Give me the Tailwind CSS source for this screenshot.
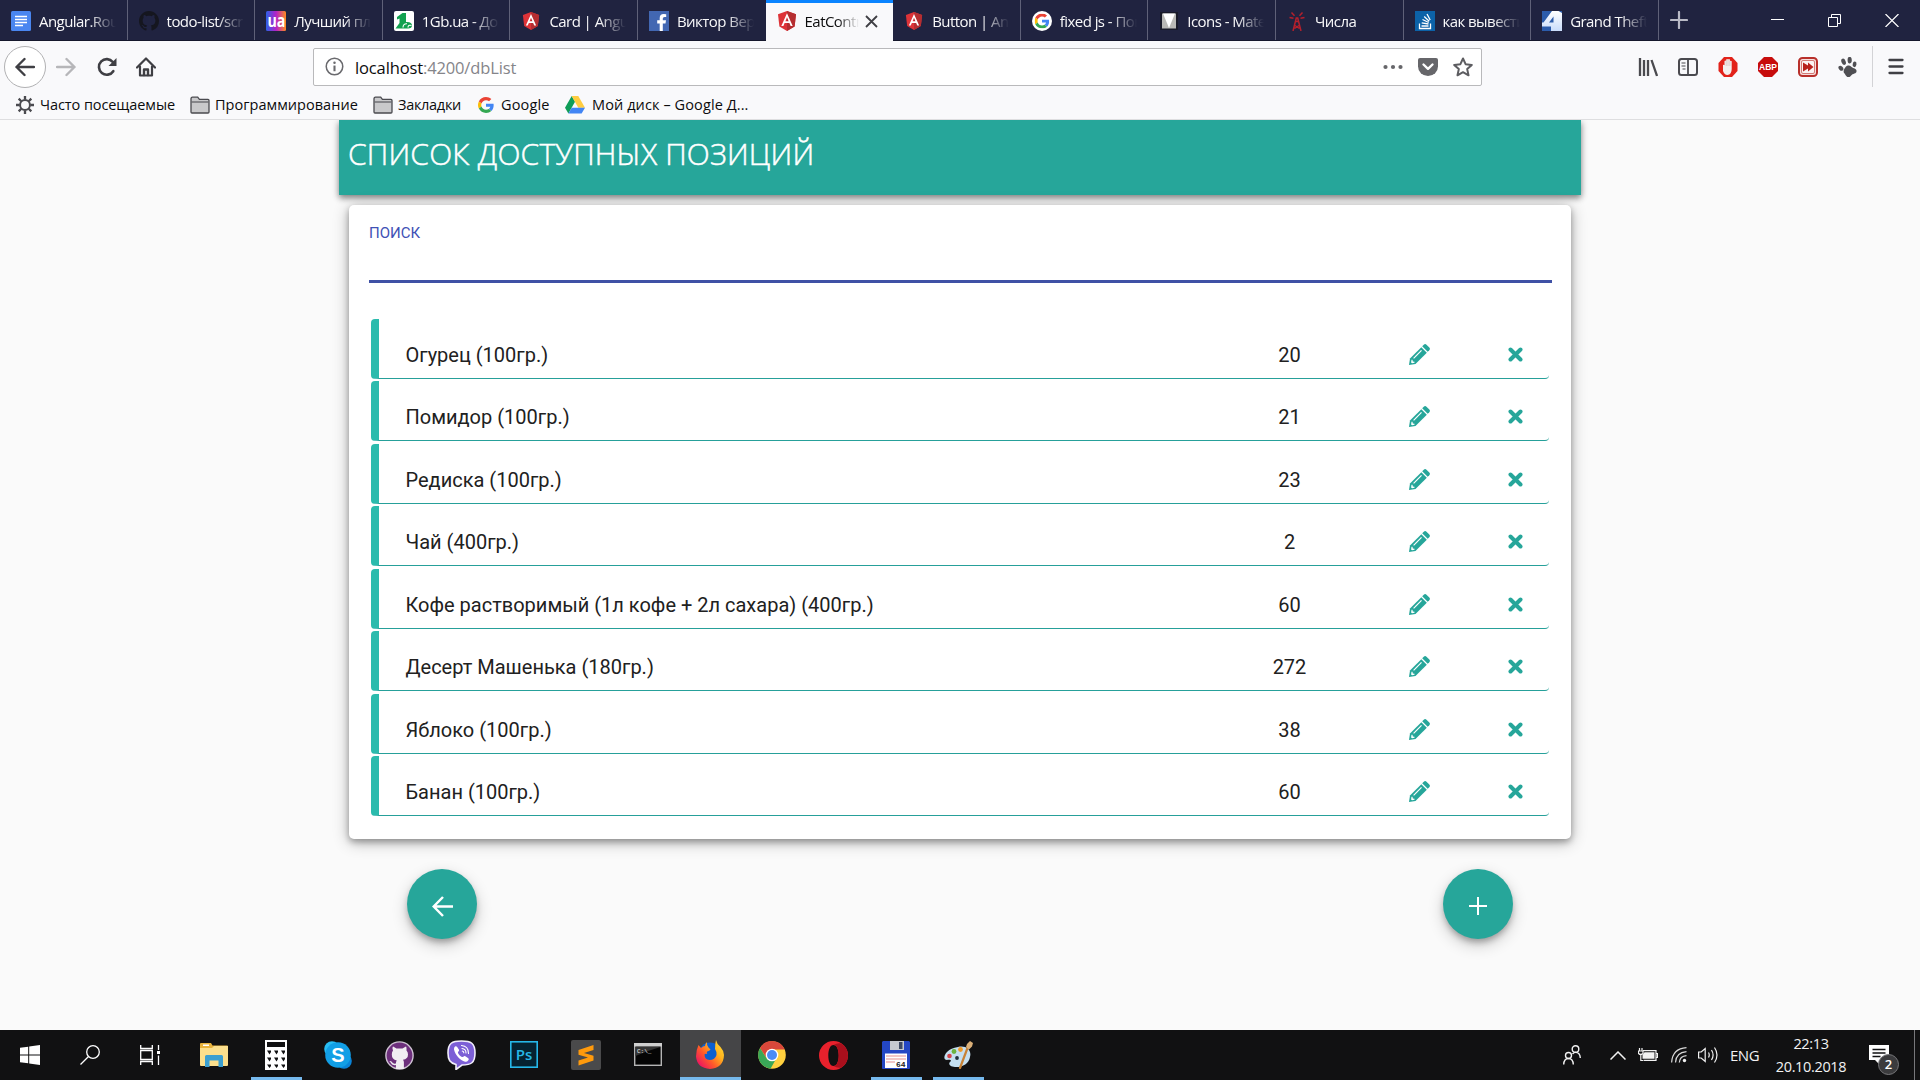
<!DOCTYPE html>
<html lang="ru">
<head>
<meta charset="utf-8">
<title>EatControl</title>
<script src="https://cdn.jsdelivr.net/npm/@tailwindcss/browser@4"></script>
</head>
<body class="w-[1920px] h-[1080px] overflow-hidden flex flex-col bg-[#fafafa] font-['Open_Sans','Noto_Sans',sans-serif]">

<svg class="hidden">
  <symbol id="angular" viewBox="0 0 20 20"><path fill="#dd3338" d="M10 0 19 3.2 17.6 15.500 10 20 2.400 15.500 1 3.200z"/><path fill="#b52e31" d="M10 0 19 3.200 17.600 15.500 10 20z"/><path fill="#fff" fill-rule="evenodd" d="M10 2.300 15.700 15H13.600L12.400 12.100H7.600L6.400 15H4.300zM10 6.300 8.400 10.300H11.600z"/></symbol>
  <symbol id="google" viewBox="0 0 48 48"><path fill="#ea4335" d="M24 9.500c3.540 0 6.710 1.220 9.210 3.600l6.850-6.850C35.900 2.380 30.470 0 24 0 14.620 0 6.510 5.380 2.560 13.220l7.980 6.190C12.430 13.720 17.740 9.500 24 9.500z"/><path fill="#4285f4" d="M46.980 24.550c0-1.570-.15-3.090-.38-4.550H24v9.020h12.940c-.58 2.960-2.260 5.480-4.780 7.180l7.730 6c4.510-4.180 7.090-10.360 7.090-17.650z"/><path fill="#fbbc05" d="M10.530 28.590c-.48-1.450-.76-2.990-.76-4.590s.27-3.140.76-4.590l-7.980-6.190C.92 16.460 0 20.120 0 24c0 3.880.92 7.540 2.560 10.780l7.970-6.190z"/><path fill="#34a853" d="M24 48c6.480 0 11.930-2.130 15.890-5.810l-7.730-6c-2.150 1.450-4.920 2.300-8.160 2.300-6.260 0-11.570-4.220-13.470-9.910l-7.980 6.190C6.510 42.620 14.620 48 24 48z"/></symbol>
  <symbol id="octocat" viewBox="0 0 16 16"><path d="M8 0C3.580 0 0 3.580 0 8c0 3.540 2.290 6.530 5.470 7.590.4.070.55-.17.55-.38 0-.19-.01-.82-.01-1.490-2.010.37-2.530-.49-2.690-.94-.09-.23-.48-.94-.82-1.130-.28-.15-.68-.52-.01-.53.63-.01 1.080.58 1.230.82.72 1.210 1.870.87 2.330.66.070-.52.28-.87.51-1.070-1.780-.2-3.640-.89-3.640-3.950 0-.87.31-1.590.82-2.150-.08-.2-.36-1.020.080-2.120 0 0 .67-.21 2.200.82.64-.18 1.320-.27 2-.27s1.360.09 2 .27c1.530-1.040 2.200-.82 2.200-.82.44 1.100.16 1.920.08 2.120.51.56.82 1.270.82 2.150 0 3.070-1.870 3.750-3.650 3.950.29.25.54.73.54 1.480 0 1.070-.01 1.930-.01 2.200 0 .21.15.46.55.38A8.010 8.010 0 0 0 16 8c0-4.420-3.580-8-8-8z"/></symbol>
  <symbol id="folder" viewBox="0 0 20 18"><path d="M1 16V3q0-1.800 1.500-1.800h5.200L9.400 3.400H18q1 0 1 1V16q0 1-1 1H2q-1 0-1-1z" fill="#c9c9cb" stroke="#4a4a4f" stroke-width="1.300"/><path d="M1.500 6h17" stroke="#5a5a5f" stroke-width="1.200"/></symbol>
  <symbol id="pencil" viewBox="0 0 21 21"><path fill="#26a69a" d="M1 14.500 12.300 3.200 17.800 8.700 6.500 20 0 21z"/><path fill="#26a69a" d="m13.200 2.300 1.600-1.600q1.300-1.200 2.700 0l2.800 2.800q1.300 1.300 0 2.700l-1.600 1.600z"/><path d="M4.600 14.300 12.500 6.400" stroke="#fff" stroke-width="1.200"/><path fill="#fff" d="m2.500 15.800 1 0 .3 1.700 1.700.3v1l-2.500.5-.9-.9z"/></symbol>
  <symbol id="cross" viewBox="0 0 15 15"><path d="m2.500 2.500 10 10M12.500 2.500l-10 10" stroke="#26a69a" stroke-width="4" stroke-linecap="round"/></symbol>
</svg>

<header class="shrink-0">
  <div id="tabs" class="h-[41px] flex bg-[#202340] border-b border-[#15172c] text-[15px] text-[#f9f9fa]"></div>

  <div class="h-[51px] flex items-center bg-[#f9f9fb] pl-[4px]">
    <div class="w-[42px] h-[42px] rounded-full border border-[#b1b1b3] bg-white flex items-center justify-center">
      <svg class="w-5 h-5" viewBox="0 0 20 20" fill="none" stroke="#3f3f44" stroke-width="2.400" stroke-linecap="round" stroke-linejoin="round"><path d="M19 10H1.500M9.500 2 1.500 10l8 8"/></svg>
    </div>
    <svg class="w-5 h-5 ml-[10px]" viewBox="0 0 20 20" fill="none" stroke="#b6b6b9" stroke-width="2.400" stroke-linecap="round" stroke-linejoin="round"><path d="M1 10h17.500M10.500 2l8 8-8 8"/></svg>
    <svg class="w-5 h-5 ml-[21px]" viewBox="0 0 20 20" fill="none" stroke="#3f3f44" stroke-width="2.600" stroke-linecap="round"><path d="M16.300 14.200A7.800 7.800 0 1 1 15.800 5"/><path d="M19.500 1v8h-8z" fill="#3f3f44" stroke="none"/></svg>
    <svg class="w-5 h-5 ml-[19px]" viewBox="0 0 20 20" fill="none" stroke="#3f3f44" stroke-width="2.200" stroke-linecap="round" stroke-linejoin="round"><path d="M1 10.500 10 1.500l9 9M4 9.500V18.500h12V9.500"/><path d="M8 18v-5.500h4V18" stroke-width="2.400"/></svg>
    <div class="ml-[157px] w-[1169px] h-[38px] bg-white border border-[#b9b9bb] rounded-[2px] flex items-center pl-[11px] pr-[8px]">
      <svg class="w-[19px] h-[19px]" viewBox="0 0 20 20" fill="none" stroke="#6a6a6e"><circle cx="10" cy="10" r="8.700" stroke-width="1.600"/><path d="M10 9v6" stroke-width="2.200"/><circle cx="10" cy="6" r="1.300" fill="#6a6a6e" stroke="none"/></svg>
      <span class="ml-[11px] pt-[2px] text-[16.500px] leading-5 tracking-[-0.130px] text-[#85858a]"><span class="text-[#0c0c0d]">localhost</span>:4200/dbList</span>
      <svg class="w-5 h-5 ml-auto" viewBox="0 0 20 20" fill="#66666a"><circle cx="2.500" cy="10" r="2.100"/><circle cx="10" cy="10" r="2.100"/><circle cx="17.500" cy="10" r="2.100"/></svg>
      <svg class="w-5 h-5 ml-[15px]" viewBox="0 0 20 20"><path fill="#66666a" d="M2 1h16q2 0 2 2v6.500a10 9.500 0 0 1-20 0V3Q0 1 2 1z"/><path d="m5.500 7.500 4.500 4.300 4.500-4.300" fill="none" stroke="#fff" stroke-width="2.400" stroke-linecap="round" stroke-linejoin="round"/></svg>
      <svg class="w-5 h-5 ml-[15px]" viewBox="0 0 20 20"><path fill="none" stroke="#5d5d61" stroke-width="2" stroke-linejoin="round" d="m10 1.500 2.600 5.700 6.200.7-4.600 4.200 1.300 6.200L10 15.200l-5.500 3.100 1.300-6.200L1.200 7.900l6.200-.7z"/></svg>
    </div>
    <div class="ml-[156px] flex items-center gap-5">
      <svg class="w-5 h-5" viewBox="0 0 20 20" stroke="#4a4a4f" stroke-width="2.300"><path d="M2 1v18M6 3v16M10 3v16M13.500 3l5.500 16"/></svg>
      <svg class="w-5 h-5" viewBox="0 0 20 20" fill="none" stroke="#4a4a4f"><rect x="1" y="2" width="18" height="16" rx="2.500" stroke-width="2"/><path d="M10 2v16" stroke-width="1.800"/><path d="M3.500 6h4M3.500 9h4M4.500 12h3" stroke-width="1.200"/></svg>
      <svg class="w-5 h-5" viewBox="0 0 20 20"><path fill="#e2231a" d="M6 0h8l5.500 6v8L14 20H6L.5 14V6z"/><path fill="#f4f0ee" d="M5 8q.9-.8 1.500.2V4q1-1 1.700 0V2.500q1-1 1.800 0 1-1 1.900 0V4q1.200-.8 1.800.2V12q0 5.500-4.300 6-3 0-4.400-4z"/><path d="M8.200 4v5M10 2.500V9M11.900 4v5" stroke="#c9a9a5" stroke-width=".5"/></svg>
      <svg class="w-5 h-5" viewBox="0 0 20 20"><path fill="#c70d0c" d="M6 0h8l6 6v8l-6 6H6l-6-6V6z"/><text x="10" y="13.300" text-anchor="middle" textLength="18" lengthAdjust="spacingAndGlyphs" fill="#fff" class="text-[9.500px] font-bold font-['Liberation_Sans',sans-serif]">ABP</text></svg>
      <svg class="w-5 h-5" viewBox="0 0 20 20"><rect x="1" y="1" width="18" height="18" rx="3.500" fill="#f6dedd" stroke="#b8302b" stroke-width="2"/><rect x="3.500" y="3.500" width="13" height="13" rx="1.500" fill="#fbf3f2" stroke="#c9605b" stroke-width=".8"/><path fill="#b8211c" d="m5 5.500 5 3V5.500l5.500 4.500-5.500 4.500v-3l-5 3z"/></svg>
      <svg class="w-5 h-5" viewBox="0 0 20 20" fill="#4f4f53"><g transform="rotate(-14 10 10)"><ellipse cx="7" cy="3.800" rx="2.100" ry="3.300" transform="rotate(-8 7 3.800)"/><ellipse cx="13.300" cy="3.700" rx="2.100" ry="3.300" transform="rotate(12 13.300 3.700)"/><ellipse cx="2.800" cy="9.500" rx="2" ry="2.800" transform="rotate(-30 2.800 9.500)"/><ellipse cx="17" cy="9" rx="1.900" ry="2.800" transform="rotate(25 17 9)"/><path d="M10.300 8.600c2.600 0 2.700 2.400 4.500 3.600 2.600 1.500 3.200 3.300 2 4.800-1.700 1.300-2.700.5-4.200 1.200-2 1-3 2.300-4.800 1.800-2.600-1-2-3.500-3-5C3.500 13 7.500 8.600 10.300 8.600z"/></g></svg>
    </div>
    <div class="ml-[14px] w-px h-[41px] bg-[#d3d3d6]"></div>
    <svg class="w-4 h-5 ml-[15px]" viewBox="0 0 16 20" stroke="#3f3f44" stroke-width="2.300" stroke-linecap="round"><path d="M1.500 3h13M1.500 9.500h13M1.500 16h13"/></svg>
  </div>

  <nav class="h-[28px] flex items-center bg-[#f9f9fb] border-b border-[#dedee0] pl-4 text-[14.500px] leading-5 text-[#0c0c0d] whitespace-nowrap">
    <a class="w-[174px] flex items-center gap-[6px] pb-[2px]"><svg class="w-[18px] h-[18px]" viewBox="0 0 20 20" fill="none" stroke="#4a4a4f"><circle cx="10" cy="10" r="5.500" stroke-width="2.200"/><path stroke-width="2.600" d="M10 0v4M10 16v4M0 10h4M16 10h4M3 3l2.800 2.800M14.200 14.200 17 17M17 3l-2.800 2.800M5.800 14.200 3 17"/></svg><span class="tracking-[-0.080px]">Часто посещаемые</span></a>
    <a class="w-[183px] flex items-center gap-[5px] pb-[2px]"><svg class="w-5 h-[18px]"><use href="#folder"/></svg><span class="tracking-[0.030px]">Программирование</span></a>
    <a class="w-[105px] flex items-center gap-[5px] pb-[2px]"><svg class="w-5 h-[18px]"><use href="#folder"/></svg><span class="tracking-[-0.300px]">Закладки</span></a>
    <a class="w-[87px] flex items-center gap-[7px] pb-[2px]"><svg class="w-4 h-4"><use href="#google"/></svg><span class="tracking-[0.150px]">Google</span></a>
    <a class="flex items-center gap-[7px] pb-[2px]"><svg class="w-5 h-[18px]" viewBox="0 0 20 18"><path fill="#0f9d58" d="M6.700 0 0 11.700 3.400 17.500 10 5.800z"/><path fill="#ffcd40" d="M6.700 0h6.600L20 11.700h-6.700z"/><path fill="#4285f4" d="M6.700 11.700H20l-3.400 5.800H3.400z"/></svg><span class="tracking-[0.100px]">Мой диск – Google Д...</span></a>
  </nav>
</header>

<main class="h-[910px] shrink-0 overflow-hidden flex flex-col items-center font-[Roboto,sans-serif]">
  <h1 class="w-[1242px] h-[75px] shrink-0 pl-[9px] pt-[11px] bg-[#26a69a] text-white text-[30px] leading-[46px] font-light tracking-[0.210px] [-webkit-text-stroke:0.5px_white] font-['Open_Sans','Noto_Sans',sans-serif] whitespace-nowrap shadow-[0_3px_6px_rgba(0,0,0,0.4),0_2px_8px_rgba(0,0,0,0.15)]">СПИСОК ДОСТУПНЫХ ПОЗИЦИЙ</h1>
  <section class="mt-[10px] w-[1222px] h-[634px] shrink-0 rounded-[5px] bg-white pl-5 pr-[19px] shadow-[0_3px_6px_rgba(0,0,0,0.28),0_3px_16px_rgba(0,0,0,0.3)]">
    <div class="h-[78px] pt-[18px] border-b-[3px] border-[#3f51a5] text-[#3f51b5] text-[15px] leading-5">ПОИСК</div>
    <div id="rows" class="mt-[36px] ml-[2px] mr-[3px] flex flex-col gap-[2.430px]"></div>
  </section>
  <div class="mt-[30px] w-[1106px] flex justify-between">
    <button class="w-[70px] h-[70px] rounded-full bg-[#26a69a] shadow-[0_4px_6px_-1px_rgba(0,0,0,0.28),0_6px_16px_rgba(0,0,0,0.2)] flex items-center justify-center pt-[4px]"><svg class="w-[21px] h-[21px]" viewBox="0 0 21 21" fill="none" stroke="#fff" stroke-width="2.500"><path d="M21 10.500H2M11 1 1.700 10.500 11 20"/></svg></button>
    <button class="w-[70px] h-[70px] rounded-full bg-[#26a69a] shadow-[0_4px_6px_-1px_rgba(0,0,0,0.28),0_6px_16px_rgba(0,0,0,0.2)] flex items-center justify-center pt-[4px]"><svg class="w-[18px] h-[18px]" viewBox="0 0 18 18" stroke="#fff" stroke-width="2"><path d="M0 9h18M9 0v18"/></svg></button>
  </div>
</main>

<footer class="h-[50px] shrink-0 flex bg-[#111112] text-[#f2f2f2]">
  <div class="w-[60px] flex items-center justify-center"><svg class="w-5 h-5" viewBox="0 0 20 20" fill="#fff"><path d="M0 2.800 8.200 1.700v7.800H0zM9.200 1.500 20 0v9.500H9.200zM0 10.500h8.200v7.800L0 17.200zM9.200 10.500H20V20L9.200 18.500z"/></svg></div>
  <div class="w-[60px] flex items-center justify-center"><svg class="w-5 h-5" viewBox="0 0 20 20" fill="none" stroke="#fff" stroke-width="1.300"><circle cx="13" cy="7" r="6.300"/><path d="M8.500 11.500.5 19.500"/></svg></div>
  <div class="w-[60px] flex items-center justify-center"><svg class="w-5 h-5" viewBox="0 0 20 20" fill="none" stroke="#fff" stroke-width="1.300"><path d="M.7 0v3.500h11.600V0M.7 20v-3.500h11.600V20M.7 5.500h11.600v9H.7zM18.500 0v5M18.500 10.500V20"/><path d="M18.500 6v3" stroke-width="3"/></svg></div>
  <div class="w-[66px] flex items-center justify-center pl-[2px] pb-px"><svg class="w-7 h-6" viewBox="0 0 28 24"><path fill="#e8b33c" d="M0 1q0-1 1-1h10l1.500 2.500H27q1 0 1 1V22H0z"/><path fill="#fbdf8c" d="M0 5h12l2-2h14v19q0 1-1 1H1q-1 0-1-1z"/><path fill="#fff" d="M3 1.500h6v1.500H3z"/><path fill="#3b9fd0" d="M5 13.500q0-1.500 1.500-1.500h15q1.500 0 1.500 1.500V24h-4.500v-6.500h-9V24H5z"/></svg></div>
  <div class="w-[60px] flex flex-col items-center justify-between pt-[10px]"><svg class="w-[22px] h-[30px]" viewBox="0 0 22 30"><path fill="#fff" d="M0 0h22v30H0z"/><path fill="#111112" d="M2 2h18v5H2zM2 10.500h4v1.500L4.500 14.500zM9 10.500h4v1.500L11.500 14.500zM16 10.500h4v1.500L18.500 14.500zM2 17.500h4v1.500L4.500 21.500zM9 17.500h4v1.500L11.500 21.500zM16 17.500h4v1.500L18.500 21.500zM2 24.500h4V26L4.500 28zM9 24.500h4V26L11.500 28zM16 24.500h4V26L18.500 28z"/></svg><div class="w-[51px] h-[3px] bg-[#76b9ed]"></div></div>
  <div class="w-[63px] flex items-center justify-center"><svg class="w-7 h-7" viewBox="0 0 28 28"><circle cx="8" cy="8" r="7.800" fill="#28bdf3"/><circle cx="20" cy="20" r="7.800" fill="#0a84d8"/><circle cx="14" cy="14" r="12.800" fill="#129fe6"/><text x="14" y="21" text-anchor="middle" fill="#fff" class="text-[20px] font-bold font-['Liberation_Sans',sans-serif]">S</text></svg></div>
  <div class="w-[61px] flex items-center justify-center"><svg class="w-[29px] h-[29px]" viewBox="0 0 29 29"><circle cx="14.500" cy="14.500" r="13.600" fill="#6d2f7c" stroke="#cfc3d3" stroke-width="1.400"/><path fill="#f1edf2" d="M7.500 7.500q0-2 .6-2l3.400 2h6l3.400-2q.6 0 .6 2v2q1.500 1.500 1.500 4 0 4.500-5 5.300.9 1 .9 2.500V28h-8v-4q-4 .8-5.300-2.500-.5-1-1.300-1.500 2.300-.5 3 1.500 1 1.600 3.600 1 0-2 .9-3-5-.8-5-6 0-2.500 1.200-4z"/></svg></div>
  <div class="w-[62px] flex items-center justify-center"><svg class="w-[29px] h-[30px]" viewBox="0 0 29 30"><path fill="#7c5fd6" stroke="#f2effb" stroke-width="1.600" d="M14.500 1C24 1 28 3 28 13s-4 12-13 12l-6 4.500v-5C3 23 1 20 1 13 1 3 5 1 14.500 1z"/><path fill="#fff" d="M8 6.500q1-.8 2 .2l2 3q.5 1-.8 2-1 .8 1.300 3.500 2.800 2.500 3.800 1.600 1-1.200 2-.6l3 2q1 .8 0 2-1.400 2-3.200 1.500C13 20 8.500 15.500 7 9.500q-.2-1.800 1-3z"/><path d="M14.500 5.500q7 .5 7 8M15 8.500q4 .4 4 4.500M15.300 11q1.500.2 1.500 1.800" fill="none" stroke="#fff" stroke-width="1.100" stroke-linecap="round"/></svg></div>
  <div class="w-[64px] flex items-center justify-center pb-[2px]"><svg class="w-7 h-[27px]" viewBox="0 0 28 27"><rect x=".8" y=".8" width="26.400" height="25.400" fill="#062230" stroke="#26b7e8" stroke-width="1.600"/><text x="14" y="18.500" text-anchor="middle" fill="#26b7e8" class="text-[15px] font-semibold font-['Open_Sans',sans-serif]">Ps</text></svg></div>
  <div class="w-[60px] flex items-center justify-center"><svg class="w-[30px] h-[30px]" viewBox="0 0 30 30"><rect width="30" height="30" rx="2" fill="#4a4a4b"/><path fill="#ff9a0c" d="M7.500 10 22.500 5v5L13 13l9.500 2.700v4.800L7.500 25.500v-5l9.500-3-9.500-2.700z"/></svg></div>
  <div class="w-[64px] flex items-center justify-center pr-px pb-[2px]"><svg class="w-7 h-[23px]" viewBox="0 0 28 23"><rect x=".7" y=".7" width="26.600" height="21.600" fill="#050505" stroke="#b5b5b5" stroke-width="1.400"/><path fill="#cfcfcf" d="M0 0h28v3.500H0z"/><path fill="#333" d="M1.500 4h25L14 8 1.500 13z"/><text x="3" y="9.500" fill="#eee" class="text-[6px] font-['Liberation_Mono',monospace]">C:\_</text></svg></div>
  <div class="w-[61px] bg-[#454547] flex flex-col items-center justify-between pt-[10px]"><svg class="w-7 h-[29px] mr-[2px]" viewBox="0 0 28 29"><defs><linearGradient id="fx" x1="1" y1="0" x2=".1" y2=".8"><stop offset="0" stop-color="#ffe43a"/><stop offset=".4" stop-color="#ffb21d"/><stop offset=".7" stop-color="#ff5a2a"/><stop offset="1" stop-color="#ee1b5c"/></linearGradient></defs><circle cx="14" cy="13.500" r="11" fill="#0a5fd0"/><path fill="url(#fx)" d="M2.500 5 5 8q2-2 4-2 0-2 2-4-.5 3.500 1.500 5.500l2 2q-1 1.500-3.300 2-.8.700 0 2.500-1.500-.8-2.700.2 0 5.500 5 5.800Q19 20 20.500 15q.6-3-1.500-6 0-5 1-9 .8 4 4.500 7Q28 11 28 15 27.500 28 14 29 1 28 0 16.500 0 10 2.500 5z"/></svg><div class="w-full h-[3px] bg-[#76b9ed]"></div></div>
  <div class="w-[62px] flex items-center justify-center"><svg class="w-7 h-7" viewBox="0 0 28 28"><circle cx="14" cy="14" r="13.800" fill="#ffd03e"/><path fill="#d9473a" d="M2 7A13.800 13.800 0 0 1 26 7l.6 1.500H14L8.500 17z"/><path fill="#3aa757" d="M2 7A13.800 13.800 0 0 0 12.500 27.700L18 18H9z"/><circle cx="14" cy="14" r="6.300" fill="#fff"/><circle cx="14" cy="14" r="5" fill="#4a8cf5"/></svg></div>
  <div class="w-[61px] flex items-center justify-center"><svg class="w-[29px] h-[29px]" viewBox="0 0 29 29"><path fill="#e8212c" fill-rule="evenodd" d="M14.500 0a14.500 14.500 0 1 1 0 29 14.500 14.500 0 0 1 0-29zm0 4C11 4 9.300 9 9.300 14.500S11 25 14.500 25s5.200-5 5.200-10.500S18 4 14.500 4z"/><path fill="#a90f1c" d="M14.500 4q4-2.500 8-1.500Q29 7 29 14.500T22.500 26.500q-4 1-8-1.500c3.500 0 5.200-5 5.200-10.500S18 4 14.500 4z"/></svg></div>
  <div class="w-[64px] flex flex-col items-center justify-between pt-[11px]"><svg class="w-7 h-7" viewBox="0 0 28 28"><path fill="#2447c4" d="M1 0h26l1 1v26q0 1-1 1H1q-1 0-1-1V1z"/><path fill="#c6c9cf" d="M8 0h14v9H8z"/><path fill="#3f4a63" d="M17 1h3.500v7H17z"/><path fill="#fff" d="M3 12.500h22V27H3z"/><path d="M4 15h20M4 18h20M4 21h9" stroke="#e58f8f"/><text x="14" y="26" fill="#222" class="text-[8px] font-bold font-['Liberation_Mono',monospace]">64</text></svg><div class="w-[51px] h-[3px] bg-[#76b9ed]"></div></div>
  <div class="w-[60px] flex flex-col items-center justify-between pt-[11px]"><svg class="w-[29px] h-7" viewBox="0 0 29 28"><path fill="#c5dff0" d="M14 6C22 4 28 9 26 16c-1 7-8 10.500-15 10C5 26 4 22 6.500 20.500 8 19 5.500 18.500 3 19-1 19 0 14 3 11c3-3 6-4 11-5z"/><circle cx="10" cy="10.500" r="2.400" fill="#6cb33f"/><circle cx="16.500" cy="8.500" r="2.400" fill="#f09a28"/><circle cx="5.500" cy="15" r="2.300" fill="#d5454b"/><circle cx="13" cy="17" r="1.900" fill="#22313d"/><path d="M23.500 7 16 27" stroke="#c98234" stroke-width="2.200" stroke-linecap="round"/><path fill="#dbb078" d="m22 6 1-3 3-3 3 2-1 3.500-3 3z"/></svg><div class="w-[51px] h-[3px] bg-[#76b9ed]"></div></div>

  <div class="ml-auto flex items-center">
    <svg class="w-[18px] h-5" viewBox="0 0 18 20" fill="none" stroke="#f2f2f2" stroke-width="1.400"><circle cx="12.500" cy="4" r="3.300"/><circle cx="5.500" cy="10.500" r="3"/><path d="M.7 19.500q.3-6 4.800-6t4.800 6M9.500 9q1.500-1.600 3-1.600 4.500 0 4.800 5.600"/></svg>
    <svg class="w-4 h-[9px] ml-[29px]" viewBox="0 0 16 9" fill="none" stroke="#f2f2f2" stroke-width="1.500"><path d="m.5 8.500 7.500-7.500 7.500 7.500"/></svg>
    <svg class="w-5 h-[14px] ml-[12px]" viewBox="0 0 20 14" fill="none" stroke="#f2f2f2" stroke-width="1.200"><path d="M5 2.600h13v9.800H5.500M18.500 5.500h1v4h-1M1.500 0v3M4 0v3M.5 3h4.500v2.500q-2.200 2-4.500 0zM2.800 6v6.500H5"/><path fill="#f2f2f2" stroke="none" d="M6.500 4.200h10v6.600H4.500V7z"/></svg>
    <svg class="w-4 h-4 ml-[13px]" viewBox="0 0 16 16" fill="none" stroke="#d8d8d8" stroke-width="1.200"><path d="M.6 15.500Q1.500 1.500 15.500.6M4.500 15.500Q5 5.500 15.500 4.700M8.300 15.500Q8.800 9.200 15.500 8.700"/><circle cx="13.500" cy="13.500" r="1.700" fill="#f2f2f2" stroke="none"/></svg>
    <svg class="w-5 h-[18px] ml-[11px]" viewBox="0 0 20 18" fill="none" stroke="#f2f2f2" stroke-width="1.200"><path d="M.6 6v6h2.600l4 3.500v-13L3.200 6zM10.500 6.500q1.500 2.500 0 5M13.500 4q3.200 5 0 10M16.500 1.500q5 7.500 0 15"/></svg>
    <span class="ml-[12px] w-[31px] text-[15px] tracking-[-0.500px]">ENG</span>
    <div class="ml-[7px] w-[86px] text-center text-[14.500px] tracking-[-0.350px] leading-[23px] pb-px"><div>22:13</div><div>20.10.2018</div></div>
    <div class="relative ml-[15px] w-5 h-5"><svg class="w-5 h-5" viewBox="0 0 20 20"><path fill="#fff" d="M0 0h20v15H11v5l-5-5H0z"/><path d="M3.500 4.500h13M3.500 8h13M3.500 11.500h8" stroke="#111112" stroke-width="1.300"/></svg>
      <span class="absolute left-[9px] top-[9px] w-[21px] h-[21px] rounded-full bg-[#3b3b3d] border border-[#77777a] text-white text-[13px] leading-[19px] font-semibold text-center">2</span></div>
    <div class="ml-[25px] mr-[5px] w-px h-[50px] bg-[#77777a]"></div>
  </div>
</footer>

<script>
const fav = {
  doc: '<svg class="w-5 h-5" viewBox="0 0 20 20"><rect width="20" height="20" rx="1.500" fill="#4a86f0"/><path d="M4 5.500h12M4 8.500h12M4 11.500h12M4 14.500h8" stroke="#fff" stroke-width="1.500"/></svg>',
  git: '<svg class="w-5 h-5 fill-[#15161f]"><use href="#octocat"/></svg>',
  ua: '<svg class="w-5 h-5" viewBox="0 0 20 20"><defs><linearGradient id="uag"><stop offset="0" stop-color="#2b62e8"/><stop offset=".5" stop-color="#b321c9"/><stop offset="1" stop-color="#ff8a1e"/></linearGradient></defs><rect width="20" height="20" rx="1.500" fill="url(#uag)"/><text x="10.500" y="15.500" text-anchor="middle" textLength="18" lengthAdjust="spacingAndGlyphs" fill="#fff" class="text-[17px] font-bold">ua</text></svg>',
  gb: '<svg class="w-5 h-5" viewBox="0 0 20 20"><rect width="20" height="20" rx="2" fill="#fff"/><path fill="#12a150" d="M3 6 8.500 2H12v9q6-.5 6 3.500 0 3-4 3H1.500L5.500 12V7.500L3 8.500z"/><path d="M9 16.500q0-4 4-3.700M14 16.500q0-3 3.500-2" stroke="#fff" stroke-width="1.100" fill="none"/></svg>',
  ang: '<svg class="w-[18px] h-[18px] mx-px"><use href="#angular"/></svg>',
  angBig: '<svg class="w-5 h-5"><use href="#angular"/></svg>',
  fb: '<svg class="w-5 h-5" viewBox="0 0 20 20"><rect width="20" height="20" fill="#4267b2"/><path fill="#fff" d="M10.700 20v-7.600H8.200V9.300h2.500V7q0-4 4-4 1.600 0 2.500.2v2.700h-1.700q-1.700 0-1.700 1.600v1.800h3.200l-.5 3.100h-2.700V20z"/></svg>',
  goo: '<svg class="w-5 h-5" viewBox="0 0 20 20"><circle cx="10" cy="10" r="10" fill="#fff"/><svg x="2.500" y="2.500" width="15" height="15"><use href="#google"/></svg></svg>',
  mat: '<svg class="w-5 h-5" viewBox="0 0 20 20"><path fill="#111" d="M1 1h18v18H1z" opacity=".5"/><path fill="#b9b9b5" d="M3 2.500h14v15H3z"/><path fill="#fff" d="M4 2.500h12L10 17z"/></svg>',
  tower: '<svg class="w-5 h-5" viewBox="0 0 20 20" fill="none" stroke="#b4202c" stroke-width="1.500"><path d="M6 20 9.300 7h1.400L14 20M8 14.500l4.500 3M12 14.500l-4.500 3M8.500 10.500h3M2.500 6.500l4 .8M4.500 1.500l3 3.300M17.500 6.500l-4 .8M15.500 1.500l-3 3.300"/></svg>',
  so: '<svg class="w-5 h-5" viewBox="0 0 20 20"><rect width="20" height="20" fill="#0c62a8"/><path d="M4.500 12.500v5h11v-5M6.500 15h7M6.700 11.800l6.800 1.200M7.500 8.500l6.200 3M9.200 5.500l5 4.700M12 3l3.200 6" fill="none" stroke="#fff" stroke-width="1.300"/></svg>',
  four: '<svg class="w-5 h-5" viewBox="0 0 20 20"><defs><linearGradient id="fg" x2="0" y2="1"><stop offset="0" stop-color="#fff"/><stop offset="1" stop-color="#c9dcfb"/></linearGradient></defs><rect width="20" height="20" fill="url(#fg)"/><path fill="#2c5cab" d="M0 0h10L1.500 11.500H0zM0 15.500h9V20H0zM7 11.500l4.500-6v6zM16.500 0H20v2z"/></svg>'
};
const tabs = [['doc','Angular.Routing'],['git','todo-list/scripts'],['ua','Лучший план'],['gb','1Gb.ua - Домены'],['ang','Card | Angular'],['fb','Виктор Верни'],['angBig','EatControl'],['ang','Button | Angular'],['goo','fixed js - Поиск'],['mat','Icons - Material'],['tower','Числа'],['so','как вывести'],['four','Grand Theft Auto']];
document.getElementById('tabs').innerHTML = tabs.map(([f, t], i) => {
  const on = i === 6;
  return `<div class="w-[127.600px] shrink-0 flex items-center pl-[11px] pt-[1px] ${on ? 'bg-[#f9f9fb] text-[#0c0c0d] h-[41px] border-t-[3px] border-[#0a84ff] pb-[3px]' : (i === 5 ? '' : 'border-r border-[#5f6178]')}">${fav[f]}<span class="ml-2 ${on ? 'w-[54px]' : 'w-[77px]'} shrink-0 overflow-hidden whitespace-nowrap tracking-[-0.550px] leading-5 ${on ? '[mask-image:linear-gradient(to_right,#000_60%,transparent)]' : '[mask-image:linear-gradient(to_right,#000_65%,transparent)]'}">${t}</span>${on ? '<svg class="w-[13px] h-[13px] ml-[6px]" viewBox="0 0 13 13" stroke="#3f3f44" stroke-width="1.800"><path d="m1 1 11 11M12 1 1 12"/></svg>' : ''}</div>`;
}).join('') + `<svg class="w-[18px] h-[18px] ml-[11px] mt-[11px]" viewBox="0 0 18 18" stroke="#b9bac6" stroke-width="2.200" stroke-linecap="round"><path d="M1 9h16M9 1v16"/></svg>
<div class="ml-auto mr-[21px] mt-[14px] flex gap-[44px]">
<svg class="w-[13px] h-[13px]" viewBox="0 0 13 13" stroke="#fff"><path d="M0 5.500h13"/></svg>
<svg class="w-[13px] h-[13px]" viewBox="0 0 13 13" fill="none" stroke="#fff"><path d="M.5 3.500h9v9h-9zM3.500 3.500v-3h9v9h-3"/></svg>
<svg class="w-[14px] h-[13px]" viewBox="0 0 14 13" stroke="#fff" stroke-width="1.200"><path d="m.5 0 13 13M13.500 0l-13 13"/></svg></div>`;

const items = [['Огурец (100гр.)',20],['Помидор (100гр.)',21],['Редиска (100гр.)',23],['Чай (400гр.)',2],['Кофе растворимый (1л кофе + 2л сахара) (400гр.)',60],['Десерт Машенька (180гр.)',272],['Яблоко (100гр.)',38],['Банан (100гр.)',60]];
document.getElementById('rows').innerHTML = items.map(([n, c]) =>
  `<div class="h-[60px] border-l-[8px] border-l-[#2bbbad] border-b border-b-[#26a09a] rounded-[4px] flex items-center pt-[12px] text-[20px] leading-6 text-[#212121]"><span class="ml-[26.500px] pt-px w-[834px]">${n}</span><span class="w-[100px] pt-px text-center">${c}</span><svg class="w-[21px] h-[21px] ml-[69.500px]"><use href="#pencil"/></svg><svg class="w-[15px] h-[15px] ml-[78px]"><use href="#cross"/></svg></div>`).join('');
</script>
</body>
</html>
